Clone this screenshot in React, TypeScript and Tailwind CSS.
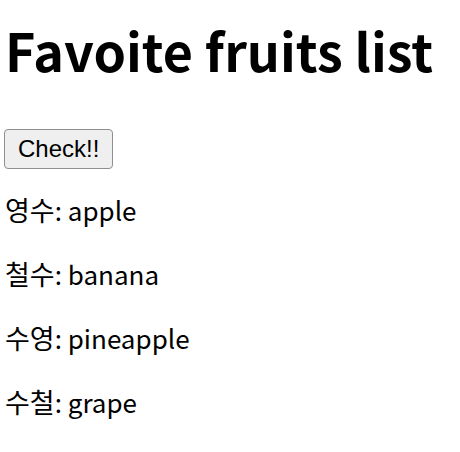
const fruits = [
  { name: '영수', fruit: 'apple' },
  { name: '철수', fruit: 'banana' },
  { name: '수영', fruit: 'pineapple' },
  { name: '수철', fruit: 'grape' },
];

export default function App() {
  return (
    <div className="bg-white min-h-screen px-[5px] text-black font-['Noto_Sans_CJK_KR','Noto_Sans',sans-serif]">
      <h1 className="pt-[24px] text-[52px] font-bold leading-none">Favoite fruits list</h1>
      <button className="mt-[53px] ml-[-1px] rounded-[4px] border border-[#8f8f8f] bg-[#efefef] px-[13px] py-[5px] text-[24px] leading-[28px] font-['Liberation_Sans',Arial,sans-serif]">
        Check!!
      </button>
      <div className="mt-[26px] flex flex-col gap-[34px]">
        {fruits.map((f) => (
          <p key={f.name} className="text-[26px] leading-[30px]">
            <span className="text-[27px]">{f.name}</span>: {f.fruit}
          </p>
        ))}
      </div>
    </div>
  );
}
